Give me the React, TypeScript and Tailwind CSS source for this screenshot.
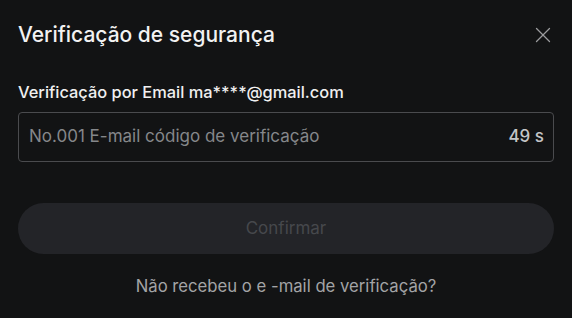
import { X } from 'lucide-react'

const App = () => {
  return (
    <div className="h-[318px] w-[572px] bg-[#121314] px-[18px] font-['Inter',sans-serif] text-white">
      <div className="flex items-center justify-between pt-[21px]">
        <h2 className="text-[21px] font-medium leading-[28px] text-[#f2f2f2]">Verificação de segurança</h2>
        <button type="button" aria-label="Fechar" className="-mr-[2px] text-[#9a9b9d]">
          <X size={26} strokeWidth={1.2} />
        </button>
      </div>

      <p className="mt-[32px] text-[16.4px] font-medium leading-[22px] text-[#f0f0f0]">
        Verificação por Email ma****@gmail.com
      </p>

      <div className="mt-[9px] flex h-[50px] items-center justify-between rounded-[4px] border border-[#4a4b4e] pl-[10px] pr-[9px]">
        <span className="text-[17px] text-[#85878a]">No.001 E-mail código de verificação</span>
        <span className="text-[17px] font-medium text-[#c4c5c7]">49 s</span>
      </div>

      <button
        type="button"
        disabled
        className="mt-[41px] flex h-[51px] w-full items-center justify-center rounded-full bg-[#232428] text-[17px] text-[#46484c]"
      >
        Confirmar
      </button>

      <p className="mt-[20px] text-center text-[16.7px] text-[#a3a4a6]">Não recebeu o e -mail de verificação?</p>
    </div>
  )
}

export default App
